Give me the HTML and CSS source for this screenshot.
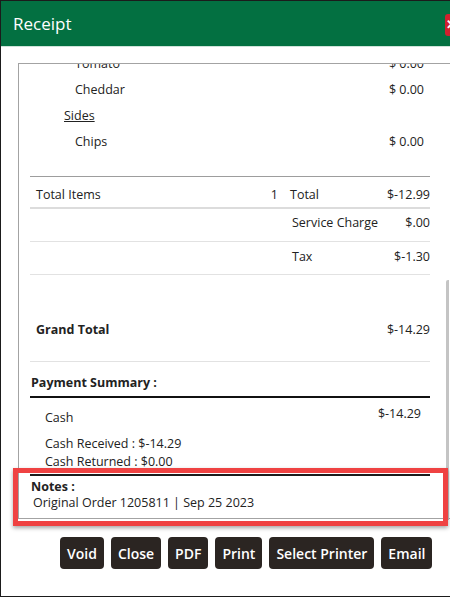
FILE: index.html
```html
<!DOCTYPE html>
<html lang="en">
<head>
<meta charset="utf-8">
<title>Receipt</title>
<link rel="stylesheet" href="styles.css">
</head>
<body>
<div class="window">
  <header class="modal-header">
    <h1 class="modal-title">Receipt</h1>
    <button class="close-btn" type="button">✕</button>
  </header>
  <div class="modal-body">
    <div class="receipt-box">
      <div class="receipt">
        <div class="item item-mod"><span>Tomato</span><span>$ 0.00</span></div>
        <div class="item item-mod"><span>Cheddar</span><span>$ 0.00</span></div>
        <div class="item item-group"><span class="group-name">Sides</span></div>
        <div class="item item-mod"><span>Chips</span><span>$ 0.00</span></div>

        <div class="totals">
          <div class="trow trow-first">
            <div class="tleft"><span>Total Items</span><span>1</span></div>
            <div class="tright"><span>Total</span><span>$-12.99</span></div>
          </div>
          <div class="trow trow-second">
            <div class="tleft"></div>
            <div class="tright"><span class="tlabel">Service Charge</span><span>$.00</span></div>
          </div>
          <div class="trow trow-third">
            <div class="tleft"></div>
            <div class="tright"><span class="tlabel">Tax</span><span>$-1.30</span></div>
          </div>
          <div class="grand">
            <span class="grand-label">Grand Total</span><span>$-14.29</span>
          </div>
        </div>

        <h2 class="section-title">Payment Summary :</h2>
        <div class="payment">
          <div class="pay-row"><span class="pay-name">Cash</span><span>$-14.29</span></div>
          <div class="pay-line">Cash Received : $-14.29</div>
          <div class="pay-line">Cash Returned : $0.00</div>
        </div>
        <div class="notes">
          <div class="notes-title">Notes :</div>
          <div class="notes-text">Original Order 1205811 | Sep 25 2023</div>
        </div>
      </div>
    </div>
    <div class="actions">
      <button class="action" type="button">Void</button>
      <button class="action" type="button">Close</button>
      <button class="action" type="button">PDF</button>
      <button class="action" type="button">Print</button>
      <button class="action" type="button">Select Printer</button>
      <button class="action" type="button">Email</button>
    </div>
  </div>
</div>
<div class="scroll-thumb"></div>
<div class="highlight"></div>
</body>
</html>
```
FILE: styles.css
```css
html, body {
  margin: 0;
  padding: 0;
}
body {
  width: 450px;
  height: 597px;
  overflow: hidden;
  position: relative;
  background: #ffffff;
  font-family: "Open Sans", "Noto Sans", sans-serif;
  font-size: 12.5px;
  color: #222;
}
.window {
  width: 470px;
  height: 595px;
  border: 1px solid #1b1b1b;
  background: #fff;
}
.modal-header {
  height: 45px;
  background: #037041;
  border-bottom: 1px solid #cfe3da;
  display: flex;
  align-items: center;
  justify-content: space-between;
  padding: 0 4px 0 12px;
}
.modal-title {
  margin: 0;
  font-size: 17px;
  font-weight: 400;
  color: #fff;
}
.close-btn {
  width: 22px;
  height: 22px;
  margin-top: 2px;
  border: none;
  border-radius: 3px;
  background: #d0202e;
  color: #fff;
  font-size: 13px;
  font-weight: 700;
  padding: 0 0 0 1px;
  line-height: 22px;
  text-align: left;
}
.modal-body {
  padding: 16px 0 0 17px;
}
.receipt-box {
  width: 440px;
  border: 1px solid #a3a3a3;
  overflow: hidden;
}
.receipt {
  width: 400px;
  margin: -13px 0 0 11px;
  line-height: 18px;
}
.item {
  height: 26px;
  display: flex;
  align-items: center;
  justify-content: space-between;
  padding: 0 6px 0 45px;
}
.item-group {
  padding-left: 34px;
}
.group-name {
  text-decoration: underline;
}
.totals {
  margin-top: 21px;
  border-top: 1px solid #9d9d9d;
}
.trow {
  display: grid;
  grid-template-columns: 1fr 140px;
  column-gap: 12px;
}
.trow-first {
  padding: 9px 0 3px;
  border-bottom: 2px solid #dcdcdc;
}
.trow-second {
  padding: 5px 0 9px;
  border-bottom: 1px solid #e2e2e2;
}
.trow-third {
  padding: 6px 0 8px;
  border-bottom: 1px solid #e2e2e2;
}
.tleft {
  display: flex;
  justify-content: space-between;
  padding-left: 6px;
}
.tright {
  display: flex;
  justify-content: space-between;
}
.tlabel {
  padding-left: 2px;
}
.grand {
  display: flex;
  justify-content: space-between;
  padding: 46px 0 22px 6px;
  border-bottom: 1px solid #e2e2e2;
}
.grand-label {
  font-weight: 700;
  font-size: 12.5px;
}
.section-title {
  margin: 12px 0 0;
  padding: 0 0 4px 1px;
  font-size: 12.5px;
  font-weight: 700;
  line-height: 18px;
  border-bottom: 2px solid #111;
}
.payment {
  padding: 7px 9px 3px 15px;
  border-bottom: 2px solid #1c1c1c;
}
.pay-row {
  display: flex;
  justify-content: space-between;
  align-items: flex-start;
  margin-bottom: 8px;
}
.pay-name {
  padding-top: 4px;
}
.pay-line {
  line-height: 18px;
}
.notes {
  padding: 3px 0 7px 1px;
  line-height: 16px;
}
.notes-title {
  font-weight: 700;
  font-size: 12.5px;
}
.notes-text {
  padding-left: 2px;
}
.actions {
  display: flex;
  gap: 7px;
  margin-top: 18px;
  padding-left: 42px;
}
.action {
  height: 32px;
  padding: 0 7px;
  border: none;
  border-radius: 4px;
  background: #2b2522;
  color: #fff;
  font-family: "Open Sans", "Noto Sans", sans-serif;
  font-size: 14px;
  font-weight: 600;
}
.scroll-thumb {
  position: absolute;
  left: 446px;
  top: 280px;
  width: 3px;
  height: 240px;
  border-radius: 2px 0 0 0;
  background: #c4c4c4;
}
.highlight {
  position: absolute;
  left: 13px;
  top: 468px;
  width: 425px;
  height: 48px;
  border: 5px solid #ef4242;
  box-shadow: 0 2px 4px rgba(0, 0, 0, 0.35);
}
```
